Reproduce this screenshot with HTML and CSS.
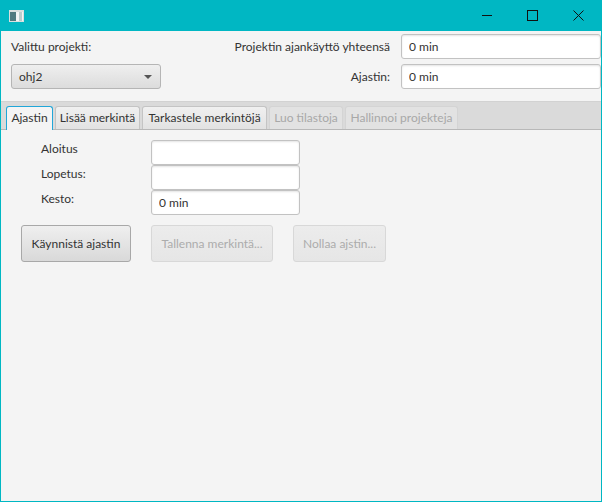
FILE: index.html
```html
<!DOCTYPE html>
<html lang="fi">
<head>
    <meta charset="UTF-8">
    <title>Ajankäyttö</title>
    <link rel="stylesheet" href="styles.css">
</head>
<body>
<div class="window">
    <div class="titlebar">
        <svg class="app-icon" width="15" height="12" viewBox="0 0 15 12">
            <rect x="0" y="0" width="15" height="12" fill="#d9dfdf"/>
            <rect x="1" y="2" width="6" height="9" fill="#4f7a80"/>
            <rect x="7" y="2" width="3" height="9" fill="#f2f5f5"/>
            <rect x="10" y="2" width="3" height="9" fill="#b9cccc"/>
            <rect x="13" y="2" width="1" height="9" fill="#f2f5f5"/>
        </svg>
        <div class="win-buttons">
            <svg width="10" height="11" viewBox="0 0 10 11"><path d="M0 5.5H10" stroke="#111" fill="none"/></svg>
            <svg width="11" height="11" viewBox="0 0 11 11"><rect x="0.5" y="0.5" width="10" height="10" stroke="#111" fill="none"/></svg>
            <svg width="11" height="11" viewBox="0 0 11 11"><path d="M0.5 0.5L10.5 10.5M10.5 0.5L0.5 10.5" stroke="#111" fill="none"/></svg>
        </div>
    </div>
    <div class="top">
        <div class="top-left">
            <label class="lbl">Valittu projekti:</label>
            <div class="combo">
                <span>ohj2</span>
                <i class="arrow"></i>
            </div>
        </div>
        <div class="top-right">
            <label class="lbl">Projektin ajankäyttö yhteensä</label>
            <input class="field" value="0 min">
            <label class="lbl">Ajastin:</label>
            <input class="field" value="0 min">
        </div>
    </div>
    <ul class="tabs">
        <li class="selected tab-1">Ajastin</li>
        <li class="tab-2">Lisää merkintä</li>
        <li class="tab-3">Tarkastele merkintöjä</li>
        <li class="disabled tab-4">Luo tilastoja</li>
        <li class="disabled tab-5">Hallinnoi projekteja</li>
    </ul>
    <div class="content">
        <div class="form">
            <label class="lbl">Aloitus</label>
            <input class="field">
            <label class="lbl">Lopetus:</label>
            <input class="field">
            <label class="lbl">Kesto:</label>
            <input class="field" value="0 min">
        </div>
        <div class="actions">
            <button class="btn btn-start">Käynnistä ajastin</button>
            <button class="btn btn-save" disabled>Tallenna merkintä...</button>
            <button class="btn btn-reset" disabled>Nollaa ajstin...</button>
        </div>
    </div>
</div>
</body>
</html>
```

FILE: styles.css
```css
*{
    margin: 0;
    padding: 0;
    box-sizing: border-box;
}
ul{
    list-style: none;
}
html,body{
    width: 100%;
    height: 100%;
    overflow: hidden;
}
body{
    font-family: Lato, "Liberation Sans", sans-serif;
    font-size: 12px;
    color: #333333;
}
.window{
    height: 502px;
    display: flex;
    flex-direction: column;
    background-color: #f4f4f4;
    border-left: 1px solid #00b7c3;
    border-right: 1px solid #00b7c3;
    border-bottom: 1px solid #00b7c3;
}
.titlebar{
    height: 31px;
    flex: none;
    display: flex;
    align-items: center;
    justify-content: space-between;
    background-color: #00b7c3;
    padding-left: 8px;
}
.win-buttons{
    display: flex;
    gap: 35px;
    padding-right: 17px;
}
.win-buttons svg{
    display: block;
}
.top{
    height: 70px;
    flex: none;
    display: flex;
    justify-content: space-between;
    padding: 3px 0 0 10px;
}
.top-left{
    width: 150px;
    display: grid;
    grid-template-rows: 25px 25px;
    row-gap: 5px;
    align-items: center;
}
.top-right{
    display: grid;
    grid-template-columns: auto 200px;
    grid-template-rows: 25px 25px;
    column-gap: 11px;
    row-gap: 5px;
    align-items: center;
    justify-items: end;
}
.lbl{
    display: block;
}
.field{
    width: 100%;
    height: 25px;
    padding: 0 7px;
    border: 1px solid #c2c2c2;
    border-radius: 3px;
    background-color: #ffffff;
    font: inherit;
    color: #333333;
    outline: none;
    box-shadow: inset 0 1px 2px #e4e4e4;
}
.combo{
    height: 25px;
    display: flex;
    align-items: center;
    justify-content: space-between;
    padding: 0 8px 0 7px;
    border: 1px solid #b5b5b5;
    border-radius: 3px;
    background: linear-gradient(#efefef, #dcdcdc);
}
.arrow{
    width: 0;
    height: 0;
    border-left: 4px solid transparent;
    border-right: 4px solid transparent;
    border-top: 4px solid #555555;
}
.tabs{
    height: 29px;
    flex: none;
    display: flex;
    gap: 2px;
    align-items: flex-end;
    padding-left: 5px;
    background-color: #dadada;
    border-top: 1px solid #d2d2d2;
    border-bottom: 1px solid #b8b8b8;
}
.tabs li{
    height: 23px;
    line-height: 22px;
    text-align: center;
    border: 1px solid #c4c4c4;
    border-bottom: none;
    border-radius: 3px 3px 0 0;
    background: linear-gradient(#f0f0f0, #e2e2e2);
}
.tab-1{
    width: 47px;
}
.tab-2{
    width: 85px;
}
.tab-3{
    width: 125px;
}
.tab-4{
    width: 74px;
}
.tab-5{
    width: 113px;
}
.tabs .selected{
    background: #f4f4f4;
    border-color: #21a6d8;
    height: 24px;
    margin-bottom: -1px;
}
.tabs .disabled{
    color: #a8a8a8;
    background: #e2e2e2;
    border-color: #d4d4d4;
}
.content{
    flex: 1;
    padding: 10px 0 0 20px;
}
.form{
    display: grid;
    grid-template-columns: 110px 149px;
    grid-auto-rows: 25px;
    padding-left: 20px;
    justify-content: start;
}
.form .lbl{
    line-height: 17px;
    height: 25px;
}
.actions{
    display: flex;
    margin-top: 10px;
}
.btn{
    height: 37px;
    font: inherit;
    border-radius: 3px;
}
.btn-start{
    width: 110px;
    color: #333333;
    border: 1px solid #a8a8a8;
    background: linear-gradient(#efefef, #d9d9d9);
}
.btn-save{
    width: 122px;
    margin-left: 20px;
}
.btn-reset{
    width: 93px;
    margin-left: 20px;
}
.btn:disabled{
    color: #acacac;
    border: 1px solid #d8d8d8;
    background: linear-gradient(#ececec, #e6e6e6);
}
```
